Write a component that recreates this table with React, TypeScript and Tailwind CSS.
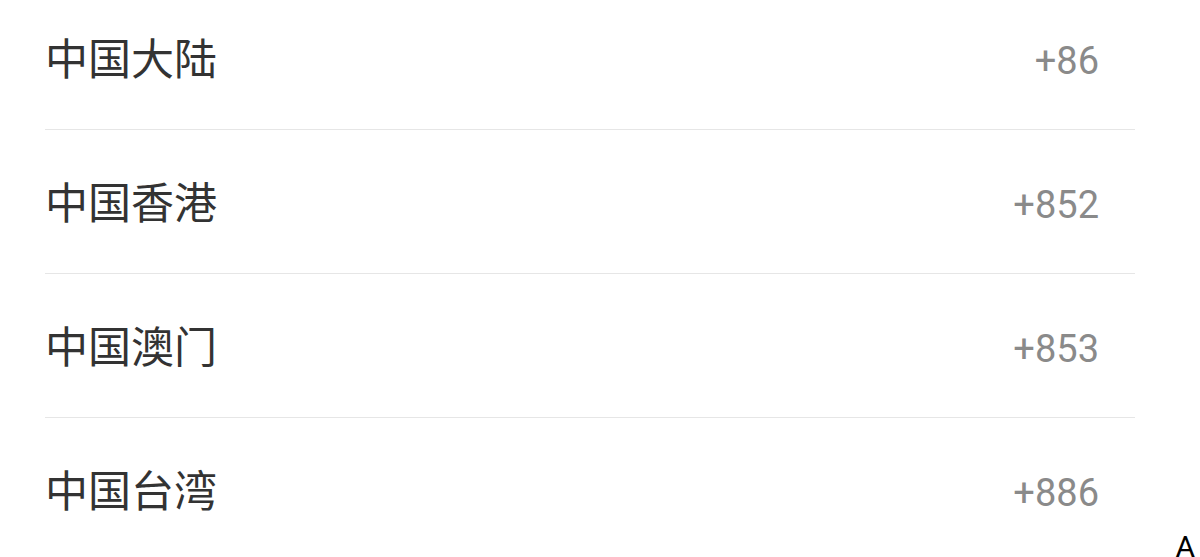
const regions = [
  { name: "中国大陆", code: "+86" },
  { name: "中国香港", code: "+852" },
  { name: "中国澳门", code: "+853" },
  { name: "中国台湾", code: "+886" },
];

export default function App() {
  return (
    <div
      className="relative w-[1200px] h-[557px] overflow-hidden bg-white"
      style={{ fontFamily: "Roboto, 'Noto Sans CJK SC', sans-serif" }}
    >
      <div className="-mt-[14px] ml-[45px] w-[1090px]">
        {regions.map((r) => (
          <div
            key={r.code}
            className="flex items-center justify-between h-[144px] border-b border-[#e6e6e6]"
          >
            <span className="mt-[6px] text-[43px] leading-none text-[#333333]">{r.name}</span>
            <span className="mt-[6px] pr-[36px] text-[38px] leading-none text-[#8a8a8a]">{r.code}</span>
          </div>
        ))}
      </div>
      <div className="absolute top-[532px] right-[5px] text-[30px] leading-none text-black">A</div>
    </div>
  );
}
